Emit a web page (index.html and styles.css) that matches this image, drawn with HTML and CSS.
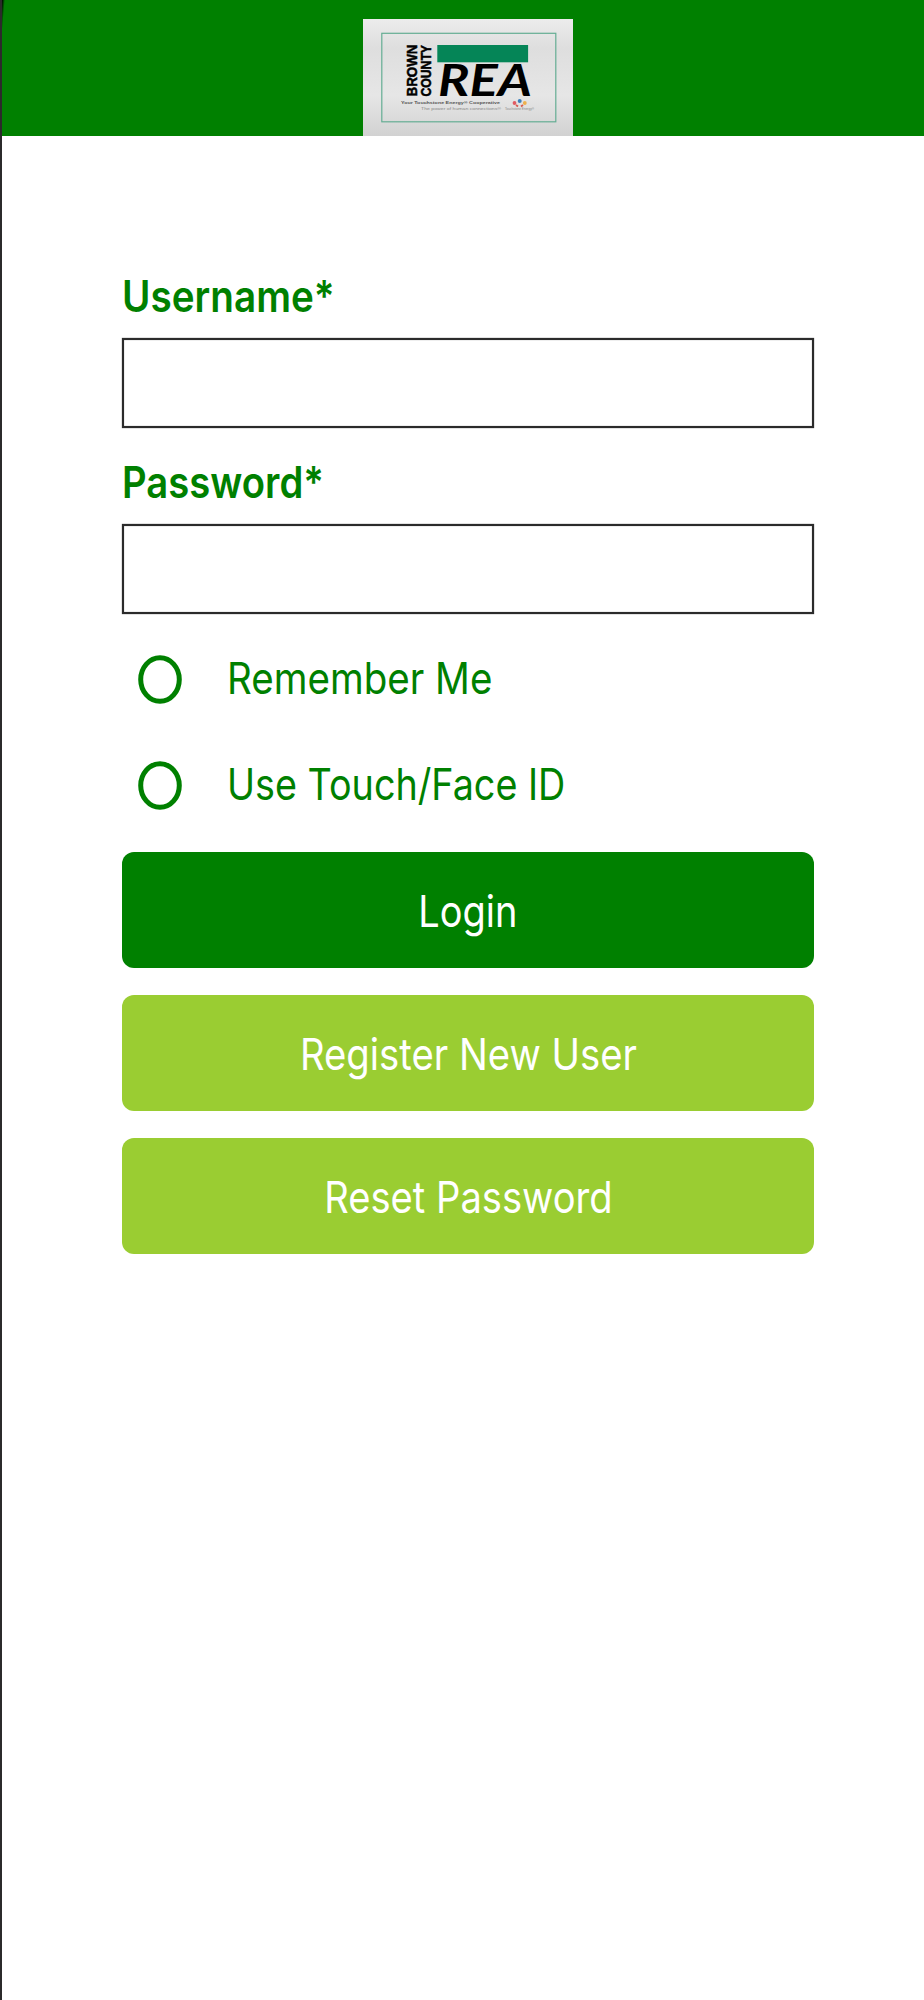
FILE: index.html
```html
<!DOCTYPE html>
<html lang="en">
<head>
<meta charset="utf-8">
<title>Brown County REA</title>
<link rel="stylesheet" href="styles.css">
</head>
<body>
<div class="screen">
  <header class="header">
    <svg class="logo" viewBox="0 0 210 117" role="img" aria-label="Brown County REA">
      <defs>
        <linearGradient id="plate" x1="0" y1="0" x2="0" y2="1">
          <stop offset="0" stop-color="#ececec"/>
          <stop offset=".25" stop-color="#dedede"/>
          <stop offset=".65" stop-color="#e6e6e6"/>
          <stop offset="1" stop-color="#d2d2d2"/>
        </linearGradient>
      </defs>
      <rect width="210" height="117" fill="url(#plate)"/>
      <rect x="18.8" y="14.3" width="174" height="88.5" fill="none" stroke="#64ad93" stroke-width="1.2"/>
      <g class="logo-side">
        <text transform="translate(54 77.5) rotate(-90)" textLength="52" lengthAdjust="spacingAndGlyphs">BROWN</text>
        <text transform="translate(68.3 77.5) rotate(-90)" textLength="51.5" lengthAdjust="spacingAndGlyphs">COUNTY</text>
      </g>
      <rect x="74.3" y="26" width="90.8" height="17.3" fill="#058557"/>
      <text class="logo-rea" x="75" y="77" textLength="94" lengthAdjust="spacingAndGlyphs">REA</text>
      <text class="logo-tag" x="38" y="85" textLength="99" lengthAdjust="spacingAndGlyphs">Your Touchstone Energy® Cooperative</text>
      <text class="logo-sub" x="58" y="91" textLength="80" lengthAdjust="spacingAndGlyphs">The power of human connections®</text>
      <text class="logo-sub" x="142" y="91" textLength="29" lengthAdjust="spacingAndGlyphs">Touchstone Energy®</text>
      <circle cx="151.5" cy="84" r="1.9" fill="#e05a62"/>
      <circle cx="156.7" cy="82" r="2" fill="#3c80bd"/>
      <circle cx="161.8" cy="84" r="1.9" fill="#eeb04c"/>
      <path d="M153 86l2 1.5M160 86l-2 1.5" stroke="#d65b50" stroke-width="1.8"/>
    </svg>
  </header>
  <form class="form">
    <label class="label" for="username"><span class="t t-user">Username*</span></label>
    <input class="field" id="username" type="text">
    <label class="label label-second" for="password"><span class="t t-pass">Password*</span></label>
    <input class="field" id="password" type="password">
    <div class="option option-first">
      <svg class="radio" viewBox="0 0 44 49"><ellipse cx="22" cy="24.5" rx="19.3" ry="21.8"/></svg>
      <span class="t t-remember">Remember Me</span>
    </div>
    <div class="option">
      <svg class="radio" viewBox="0 0 44 49"><ellipse cx="22" cy="24.5" rx="19.3" ry="21.8"/></svg>
      <span class="t t-touch">Use Touch/Face ID</span>
    </div>
    <div class="buttons">
      <button class="button button-primary" type="button"><span class="t t-login">Login</span></button>
      <button class="button" type="button"><span class="t t-register">Register New User</span></button>
      <button class="button" type="button"><span class="t t-reset">Reset Password</span></button>
    </div>
  </form>
</div>
</body>
</html>
```
FILE: styles.css
```css
* { box-sizing: border-box; }
body { margin: 0; background: #fff; font-family: Inter, "Liberation Sans", sans-serif; }
.screen { height: 2000px; border-left: 2px solid #2b2a2b; overflow: hidden; }
.header { height: 136px; background: linear-gradient(95deg, #000 0, #008000 3px) #008000; display: flex; justify-content: center; align-items: flex-end; padding-left: 10px; }
.logo { display: block; width: 210px; height: 117px; }
.logo-side { font: 700 15px "Liberation Sans", sans-serif; stroke: #000; stroke-width: .5; }
.logo-rea { font: italic 700 43px Lato, sans-serif; }
.logo-tag { font: 700 4px "Liberation Sans", sans-serif; fill: #555; }
.logo-sub { font: 4px "Liberation Sans", sans-serif; fill: #888; }
.form { display: flex; flex-direction: column; width: 692px; margin-left: 120px; padding-top: 134px; }
.label { height: 68px; font-size: 43.5px; font-weight: 600; line-height: 52px; color: #008000; }
.label-second { margin-top: 28px; }
.t { display: inline-block; white-space: nowrap; transform-origin: left center; }
.field { width: 100%; height: 90px; padding: 0 16px; border: 2px solid #2b2b2b; border-radius: 0; background: #fff; box-shadow: 0 0 1px #555, inset 0 0 1px #555; font: 40px Inter, sans-serif; outline: none; }
.option { display: flex; align-items: center; height: 106px; padding-left: 16px; gap: 45px; font-size: 43.5px; line-height: 52px; color: #008000; }
.option .t { padding-bottom: 3px; }
.option-first { margin-top: 12.5px; }
.radio { width: 44px; height: 49px; flex: none; fill: none; stroke: #008000; stroke-width: 5; }
.buttons { display: grid; gap: 26.5px; margin-top: 13px; }
.button { height: 116.5px; padding: 2px 0 0; border: 0; border-radius: 12px; background: #9acd32; color: #fff; font: 43.5px/52px Inter, sans-serif; }
.button-primary { background: #008000; }
.button .t { transform-origin: center; }
.t-user { transform: scaleX(.889); }
.t-pass { transform: scaleX(.879); }
.t-remember { transform: scaleX(.886); }
.t-touch { transform: scaleX(.867); }
.t-login { transform: scaleX(.872); }
.t-register { transform: scaleX(.88); }
.t-reset { transform: scaleX(.877); }
```
